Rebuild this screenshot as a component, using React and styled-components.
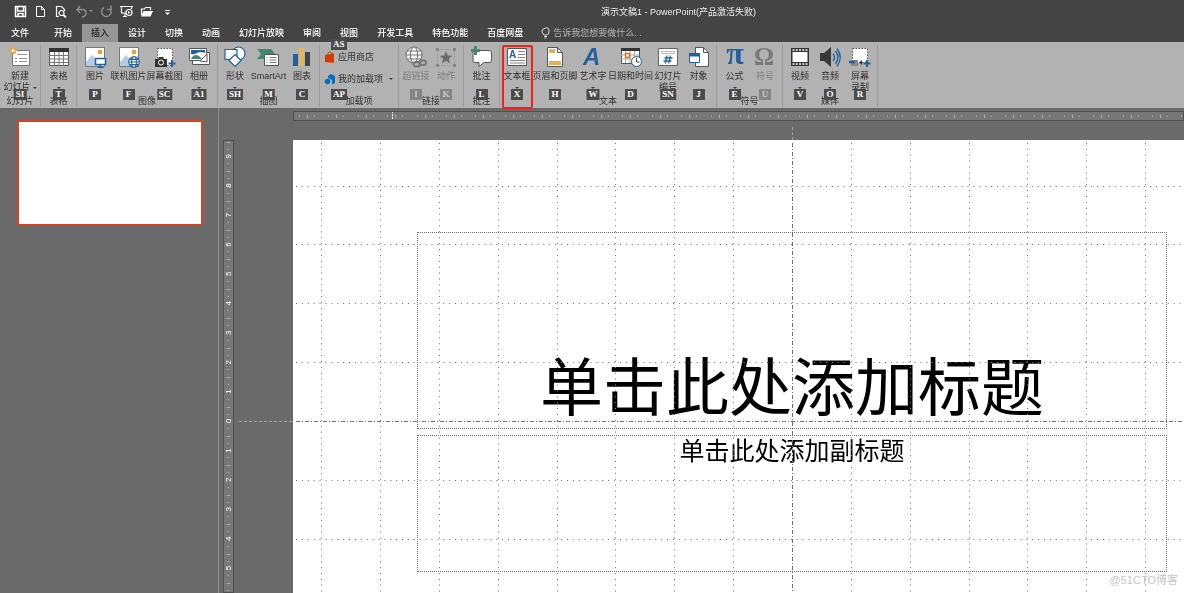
import styled, { createGlobalStyle, css } from "styled-components";

const GlobalStyle = createGlobalStyle`
  * {
    box-sizing: border-box;
  }
  body {
    margin: 0;
    background: #6a6a6a;
    font-family: "Liberation Sans", "Noto Sans CJK SC", sans-serif;
    font-size: 9px;
    line-height: 11px;
  }
  button,
  input {
    margin: 0;
    padding: 0;
    border: 0;
    background: none;
    color: inherit;
    font: inherit;
  }
`;

const Window = styled.div`
  display: flex;
  flex-direction: column;
  height: 100vh;
  overflow: hidden;
`;

const TitleBar = styled.header`
  display: flex;
  align-items: center;
  height: 24px;
  background: #444444;
  color: #f0f0f0;
`;

const QuickAccess = styled.div`
  display: flex;
  flex: 0 0 170px;
  gap: 7px;
  padding: 0 0 2px 14px;
`;

const QuickButton = styled.button`
  display: flex;
  align-items: center;
  flex: 0 0 ${(p) => (p.$split ? "19px" : "13px")};
  height: 14px;
  color: ${(p) => (p.$dim ? "#8c8c8c" : "#ffffff")};
`;

const WindowTitle = styled.h1`
  flex: 1;
  margin: 0;
  font-size: 9px;
  font-weight: normal;
  text-align: center;
`;

const TabBar = styled.nav`
  display: flex;
  flex: 0 0 18px;
  gap: 1px;
  background: #444444;
  color: #ffffff;
`;

const Tab = styled.button`
  padding: 0 9px;
  font-weight: 500;
  white-space: nowrap;
  ${(p) =>
    p.$file &&
    css`
      width: 44px;
      padding: 0 0 0 11px;
      text-align: left;
    `}
  ${(p) =>
    p.$active &&
    css`
      background: #959595;
      color: #262626;
    `}
`;

const TellMe = styled.label`
  display: flex;
  align-items: center;
  gap: 3px;
  padding-left: 8px;
`;

const TellMeInput = styled.input`
  width: 100px;
  color: #b5b5b5;
  &::placeholder {
    color: #b5b5b5;
    opacity: 1;
  }
`;

const RibbonBar = styled.section`
  display: flex;
  flex: 0 0 66px;
  padding: 3px 0 1px;
  background: #b2b2b2;
  color: #303030;
`;

const Group = styled.div`
  display: flex;
  flex-direction: column;
  justify-content: space-between;
  padding: 0 2px;
  border-right: 1px solid #9a9a9a;
`;

const GroupItems = styled.div`
  display: flex;
  height: 50px;
`;

const GroupName = styled.div`
  text-align: center;
  white-space: nowrap;
`;

const Item = styled.button`
  position: relative;
  display: flex;
  flex-direction: column;
  align-items: center;
  width: ${(p) => p.$width}px;
  padding-top: 1px;
  white-space: nowrap;
  color: ${(p) => (p.disabled ? "#7f7f7f" : "#303030")};
`;

const ItemIcon = styled.svg`
  flex: 0 0 22px;
  width: 22px;
  height: 22px;
  margin-bottom: 3px;
`;

const SecondLine = styled.span`
  display: flex;
  align-items: center;
  gap: 2px;
  height: 11px;
`;

const Arrow = styled.span`
  border: 2px solid transparent;
  border-top-color: #404040;
  border-bottom-width: 0;
`;

const KeyTip = styled.span`
  position: absolute;
  top: ${(p) => p.$top}px;
  left: ${(p) => (p.$left === undefined ? "50%" : `${p.$left}px`)};
  z-index: 1;
  min-width: 12px;
  padding: 0 2px;
  transform: ${(p) => (p.$left === undefined ? "translateX(-50%)" : "none")};
  background: ${(p) => (p.$dim ? "#858585" : "#4b4b4b")};
  color: ${(p) => (p.$dim ? "#c8c8c8" : "#ffffff")};
  font-family: "Liberation Serif", serif;
  font-size: 9px;
  font-weight: bold;
  text-align: center;
`;

const Highlight = styled.span`
  position: absolute;
  top: 0;
  left: 0;
  z-index: 2;
  width: 31px;
  height: 64px;
  border: 2px solid #f5201c;
  border-radius: 2px;
`;

const AddIns = styled.div`
  display: flex;
  flex-direction: column;
  gap: 10px;
  width: 74px;
  padding: 6px 0 0 2px;
`;

const AddInButton = styled.button`
  position: relative;
  display: flex;
  align-items: center;
  gap: 2px;
  height: 12px;
  white-space: nowrap;
`;

const AddInMenuArrow = styled(Arrow)`
  margin-left: 4px;
`;

const Workspace = styled.main`
  display: flex;
  flex: 1;
  min-height: 0;
  background: #6a6a6a;
`;

const Thumbnails = styled.aside`
  flex: 0 0 219px;
  padding: 12px 15px 0 17px;
  border-right: 1px solid #8e8e8e;
`;

const Thumbnail = styled.button`
  display: block;
  width: 100%;
  height: 106px;
  border: 2px solid #d9431f;
  background: #ffffff;
`;

const Editor = styled.section`
  position: relative;
  display: grid;
  flex: 1;
  grid-template-columns: 11px 1fr;
  grid-template-rows: 10px 1fr;
  gap: 19px 59px;
  min-width: 0;
  padding: 3px 0 0 4px;
`;

const Ruler = styled.svg`
  display: block;
  grid-column: ${(p) => (p.$vertical ? 1 : 2)};
  grid-row: ${(p) => (p.$vertical ? 2 : 1)};
  width: 100%;
  height: 100%;
  min-height: 0;
  outline: 1px solid #505050;
  outline-offset: -1px;
  background: #777777;
`;

const Slide = styled.article`
  position: relative;
  display: flex;
  grid-column: 2;
  grid-row: 2;
  flex-direction: column;
  gap: 6px;
  min-height: 0;
  padding: 92px 17px 0 124px;
  background: #ffffff;
`;

const Placeholder = styled.div`
  display: flex;
  flex: 0 0 auto;
  align-items: ${(p) => (p.$title ? "flex-end" : "flex-start")};
  justify-content: center;
  height: ${(p) => (p.$title ? 197 : 137)}px;
  border: 1px dotted #707070;
  color: #000000;
`;

const TitleText = styled.h2`
  margin: 0;
  font-size: 63px;
  font-weight: normal;
  line-height: 80px;
`;

const SubtitleText = styled.p`
  margin: 0;
  font-size: 25px;
  line-height: 30px;
`;

const GridOverlay = styled.svg`
  position: absolute;
  inset: 0;
  width: 100%;
  height: 100%;
  pointer-events: none;
  mix-blend-mode: difference;
`;

const GuideOverlay = styled.svg`
  position: absolute;
  inset: 0;
  width: 100%;
  height: 100%;
  pointer-events: none;
`;

const Watermark = styled.span`
  position: absolute;
  right: 6px;
  bottom: 6px;
  color: #c4c4c4;
  font-size: 11px;
  line-height: 14px;
`;

const BLUE = "#23609f";
const DARK = "#444444";

const Picture = () => (
  <>
    <path d="M1.5 1.5h19v19h-19z" fill="#fff" stroke="#777" />
    <path d="M2 16l6-7 5 6 3-2v7H2z" fill="#b5cce2" />
    <circle cx="16" cy="6" r="2.4" fill="#e8a33d" />
  </>
);

const Globe = ({ cx, cy, r, color }) => (
  <g fill="#fff" stroke={color} strokeWidth="1.1">
    <circle cx={cx} cy={cy} r={r} />
    <ellipse cx={cx} cy={cy} rx={r * 0.45} ry={r} />
    <path d={`M${cx - r} ${cy}h${2 * r}M${cx - r * 0.85} ${cy - r * 0.5}h${r * 1.7}M${cx - r * 0.85} ${cy + r * 0.5}h${r * 1.7}`} />
  </g>
);

const icons = {
  newSlide: (
    <>
      <path d="M3.5 4.5h17v15h-17z" fill="#fff" stroke="#777" />
      <path d="M8 8.5h10M6 12.5h2M10 12.5h8M6 15.5h2M10 15.5h8" stroke="#999" />
      <path d="M4 0v9M-.5 4.5h9M1 1.5l6 6M7 1.5l-6 6" stroke="#e0a33f" strokeWidth="1.3" />
      <circle cx="4" cy="4.5" r="1.6" fill="#fff3d6" />
    </>
  ),
  table: (
    <>
      <path d="M1.5 2.5h19v17h-19z" fill="#fff" stroke="#555" />
      <path d="M1 2h20v4H1z" fill="#333" />
      <path d="M1 9.5h20M1 13h20M1 16.5h20M6.5 6v14M11 6v14M15.5 6v14" stroke="#777" />
    </>
  ),
  picture: (
    <>
      <Picture />
      <path d="M11.5 12.5h10v6h-10z" fill="#fff" stroke={BLUE} strokeWidth="1.5" />
      <path d="M16.5 19v2M13.5 21.2h6" stroke={BLUE} strokeWidth="1.5" />
    </>
  ),
  online: (
    <>
      <Picture />
      <Globe cx={16} cy={16} r={5.3} color={BLUE} />
    </>
  ),
  screenshot: (
    <>
      <path d="M3.5 2.5h15v17h-15z" fill="#fff" stroke="#555" strokeDasharray="1.5 1.5" />
      <path d="M1 13h3l1-2h4l1 2h3v8H1z" fill="#333" />
      <circle cx="7" cy="16.5" r="2.5" fill="#333" stroke="#fff" />
      <path d="M18 14v7M14.5 17.5h7" stroke={BLUE} strokeWidth="2" />
    </>
  ),
  album: (
    <>
      <path d="M4.5 6.5h17v12h-17z" fill="#fff" stroke="#555" />
      <path d="M1.5 2.5h17v12h-17z" fill="#fff" stroke="#555" />
      <path d="M3 4h14v3q-5-2-8 0t-6 1z" fill={BLUE} />
      <path d="M3 13q3-6 8-3l3 3z" fill="#438672" />
      <path d="M12 15l7-7v8z" fill="#fff" stroke="#555" />
    </>
  ),
  shapes: (
    <g fill="#fff" stroke={BLUE} strokeWidth="1.2">
      <circle cx="14.5" cy="7.5" r="6.5" />
      <path d="M1 3.5h12v10H1z" />
      <path d="M11 8.5l6 6-6 6-6-6z" />
    </g>
  ),
  smartArt: (
    <>
      <path d="M-1 3h14l5 6-3 4H-1l4-5z" fill="#438672" />
      <path d="M6.5 8.5h14v11h-14z" fill="#fff" stroke="#555" />
      <path d="M8.5 11.5h1M11.5 11.5h7M8.5 14h1M11.5 14h7M8.5 16.5h1M11.5 16.5h7" stroke="#777" />
    </>
  ),
  chart: (
    <>
      <path d="M2 8h5v12H2z" fill={BLUE} />
      <path d="M8 2h5v18H8z" fill="#e2b764" />
      <path d="M14 6h5v14h-5z" fill={DARK} />
    </>
  ),
  link: (
    <>
      <Globe cx={9} cy={9} r={8} color="#777" />
      <g fill="none" stroke="#777" strokeWidth="1.8">
        <rect x="8.5" y="16" width="7" height="4.5" rx="2.2" />
        <rect x="14" y="14.5" width="7" height="4.5" rx="2.2" />
      </g>
    </>
  ),
  action: (
    <>
      <path d="M2.5 3.5h17v16h-17z" fill="none" stroke="#888" strokeDasharray="1 2" />
      <path d="M1 2h3v3H1zM18 2h3v3h-3zM1 18h3v3H1zM18 18h3v3h-3z" fill="#888" />
      <path d="M11 5l1.8 4.5 4.7.3-3.7 3 1.3 4.7-4.1-2.7-4.1 2.7 1.3-4.7-3.7-3 4.7-.3z" fill="#6b6b6b" />
    </>
  ),
  comment: (
    <>
      <path d="M3.5 4.5h15q2 0 2 2v8q0 2-2 2H13l-5 4v-4H4q-2 0-2-2v-8z" fill="#fff" stroke="#555" />
      <path d="M4.5 0v9M0 4.5h9" stroke="#438672" strokeWidth="3" />
    </>
  ),
  textBox: (
    <>
      <path d="M1.5 2.5h19v17h-19z" fill="#fff" stroke="#555" />
      <text x="3" y="12" fill={BLUE} fontSize="10" fontWeight="bold">A</text>
      <path d="M12 5.5h7M12 8.5h7M12 11.5h7M4 14.5h15M4 17h15" stroke="#888" />
    </>
  ),
  header: (
    <>
      <path d="M3.5 1.5h10l5 5v14h-15z" fill="#fff" stroke="#555" />
      <path d="M5 3h6v4H5zM5 15h12v4H5z" fill="#e2b050" />
      <path d="M13.5 1.5v5h5" fill="none" stroke="#555" />
    </>
  ),
  wordArt: (
    <text x="1" y="19" fill={BLUE} fontSize="24" fontStyle="italic" fontWeight="bold">A</text>
  ),
  date: (
    <>
      <path d="M1.5 2.5h18v15h-18z" fill="#fff" stroke="#555" />
      <path d="M1 2h19v3H1z" fill="#333" />
      <path d="M1 9h18M1 13h18M5.5 5v12M10 5v12M14.5 5v12" stroke="#aaa" />
      <path d="M5.5 7.5h4v4h-4z" fill="#fff" stroke="#dd6b20" strokeWidth="1.4" />
      <circle cx="16.5" cy="15.5" r="5" fill="#fff" stroke={BLUE} />
      <path d="M16.5 12v4h3" fill="none" stroke="#444" />
    </>
  ),
  number: (
    <>
      <path d="M1.5 2.5h19v17h-19z" fill="#fff" stroke="#666" />
      <path d="M4 5.5h14M4 7.5h14" stroke="#bbb" />
      <path d="M9.8 9.5l-1.5 8M13.3 9.5l-1.5 8M7.5 12h8M6.5 15h8" stroke={BLUE} strokeWidth="1.3" />
    </>
  ),
  object: (
    <>
      <path d="M7.5 1.5h8l5 5v14h-13z" fill="#fff" stroke="#555" />
      <path d="M15.5 1.5v5h5" fill="none" stroke="#555" />
      <path d="M1.5 7.5h10v9h-10z" fill="#fff" stroke={BLUE} />
      <path d="M1 7h11v3.5H1z" fill={BLUE} />
    </>
  ),
  equation: (
    <text x="11" y="18" fill={BLUE} fontFamily="Liberation Serif" fontSize="32" fontWeight="bold" textAnchor="middle">π</text>
  ),
  symbol: (
    <text x="10" y="19" fill="#777777" fontFamily="Liberation Serif" fontSize="25" fontWeight="bold" textAnchor="middle">Ω</text>
  ),
  video: (
    <>
      <path d="M2 2h18v18H2z" fill="#333" />
      <path d="M3.5 6h15v10h-15z" fill="#fff" />
      <path d="M3.5 4h15M3.5 18h15" stroke="#fff" strokeWidth="1.6" strokeDasharray="2 1.25" />
    </>
  ),
  audio: (
    <>
      <path d="M1 7h4l7-6v20l-7-6H1z" fill="#383838" />
      <path d="M14 8q3 3 0 7M16.5 5q5 6 0 13M18 2.5q6.5 9 0 18" fill="none" stroke={BLUE} strokeWidth="1.4" />
    </>
  ),
  record: (
    <>
      <path d="M3.5 2.5h15v14h-15z" fill="#fff" stroke="#555" strokeDasharray="1.5 1.5" />
      <path d="M2 14h7v6H2z" fill="#888" />
      <path d="M10 16.5l3-2.5v5z" fill="#333" />
      <path d="M0 16h6" stroke={BLUE} strokeWidth="2.5" />
      <path d="M18 14v7M14.5 17.5h7" stroke={BLUE} strokeWidth="2" />
    </>
  ),
};

const tabs = ["开始", "插入", "设计", "切换", "动画", "幻灯片放映", "审阅", "视图", "开发工具", "特色功能", "百度网盘"];

const slideGroups = [
  { name: "幻灯片", items: [{ label: "新建", second: "幻灯片", icon: "newSlide", tip: "SI", width: 36, arrow: true }] },
  { name: "表格", items: [{ label: "表格", icon: "table", tip: "T", width: 31, arrow: true }] },
  {
    name: "图像",
    items: [
      { label: "图片", icon: "picture", tip: "P", width: 32 },
      { label: "联机图片", icon: "online", tip: "F", width: 35 },
      { label: "屏幕截图", icon: "screenshot", tip: "SC", width: 37, arrow: true },
      { label: "相册", icon: "album", tip: "A1", width: 32, arrow: true },
    ],
  },
  {
    name: "插图",
    items: [
      { label: "形状", icon: "shapes", tip: "SH", width: 30, arrow: true },
      { label: "SmartArt", icon: "smartArt", tip: "M", width: 37 },
      { label: "图表", icon: "chart", tip: "C", width: 30 },
    ],
  },
];

const contentGroups = [
  {
    name: "链接",
    items: [
      { label: "超链接", icon: "link", tip: "I", width: 30, disabled: true },
      { label: "动作", icon: "action", tip: "K", width: 30, disabled: true },
    ],
  },
  { name: "批注", items: [{ label: "批注", icon: "comment", tip: "L", width: 31 }] },
  {
    name: "文本",
    items: [
      { label: "文本框", icon: "textBox", tip: "X", width: 30, arrow: true, highlight: true },
      { label: "页眉和页脚", icon: "header", tip: "H", width: 46 },
      { label: "艺术字", icon: "wordArt", tip: "W", width: 30, arrow: true },
      { label: "日期和时间", icon: "date", tip: "D", width: 45 },
      { label: "幻灯片", second: "编号", icon: "number", tip: "SN", width: 30 },
      { label: "对象", icon: "object", tip: "J", width: 31 },
    ],
  },
  {
    name: "符号",
    items: [
      { label: "公式", icon: "equation", tip: "E", width: 31, arrow: true },
      { label: "符号", icon: "symbol", tip: "U", width: 30, disabled: true },
    ],
  },
  {
    name: "媒体",
    items: [
      { label: "视频", icon: "video", tip: "V", width: 30, arrow: true },
      { label: "音频", icon: "audio", tip: "O", width: 30, arrow: true },
      { label: "屏幕", second: "录制", icon: "record", tip: "R", width: 30 },
    ],
  },
];

function RibbonGroup({ name, items }) {
  return (
    <Group>
      <GroupItems>
        {items.map((item) => (
          <Item key={item.label} $width={item.width} disabled={item.disabled}>
            <ItemIcon viewBox="0 0 22 22" overflow="visible" aria-hidden="true">
              {icons[item.icon]}
            </ItemIcon>
            <span>{item.label}</span>
            <SecondLine>
              {item.second}
              {item.arrow && <Arrow />}
            </SecondLine>
            <KeyTip $top={44} $dim={item.disabled}>{item.tip}</KeyTip>
            {item.highlight && <Highlight />}
          </Item>
        ))}
      </GroupItems>
      <GroupName>{name}</GroupName>
    </Group>
  );
}

function AddInsGroup() {
  return (
    <Group>
      <GroupItems>
        <AddIns>
          <AddInButton>
            <svg width="12" height="12" viewBox="0 0 12 12" aria-hidden="true">
              <path d="M1 4l9-1.5V12L1 11z" fill="#d83b01" />
              <path d="M4 4V2q2-2.5 4 0v1" fill="none" stroke="#d83b01" />
            </svg>
            应用商店
            <KeyTip $top={-12} $left={7}>AS</KeyTip>
          </AddInButton>
          <AddInButton>
            <svg width="12" height="12" viewBox="0 0 12 12" aria-hidden="true">
              <path d="M4 3l3-2 4 2v7l-3 1.5V7L4 5z" fill="#0b6cc4" />
              <circle cx="3.5" cy="8.5" r="2.8" fill="#0b6cc4" />
            </svg>
            我的加载项
            <AddInMenuArrow />
            <KeyTip $top={16} $left={7}>AP</KeyTip>
          </AddInButton>
        </AddIns>
      </GroupItems>
      <GroupName>加载项</GroupName>
    </Group>
  );
}

function QuickIcon({ children }) {
  return (
    <svg width="13" height="13" viewBox="0 0 13 13" fill="none" stroke="currentColor" strokeWidth="1.2" aria-hidden="true">
      {children}
    </svg>
  );
}

function QuickAccessBar() {
  return (
    <QuickAccess>
      <QuickButton aria-label="保存">
        <QuickIcon>
          <path d="M1.5 1.5h10v10h-10zM3.5 2v4h6V2M4 11.5v-3h5v3" strokeWidth="1.5" />
        </QuickIcon>
      </QuickButton>
      <QuickButton aria-label="新建">
        <QuickIcon>
          <path d="M2.5 1.5h5l3 3v7h-8zM7.5 1.5v3h3" strokeWidth="1" />
        </QuickIcon>
      </QuickButton>
      <QuickButton aria-label="打印预览">
        <QuickIcon>
          <path d="M5 11.5H2.5v-10h5l3 3V6" />
          <circle cx="7.5" cy="8" r="2.5" />
          <path d="M9.5 10l2.5 2.5" strokeWidth="1.8" />
        </QuickIcon>
      </QuickButton>
      <QuickButton aria-label="撤消" $dim $split>
        <QuickIcon>
          <path d="M6 1L3 4.5 6 8M3 4.5h5q4 0 4 3.5t-4 4" strokeWidth="1.5" />
        </QuickIcon>
        <svg width="6" height="4" viewBox="0 0 6 4" aria-hidden="true">
          <path d="M2 1h4L4 3z" fill="currentColor" />
        </svg>
      </QuickButton>
      <QuickButton aria-label="重复" $dim>
        <QuickIcon>
          <path d="M10 3.5A4.8 4.8 0 1 1 4 2.5M7 4.5h4V.5" strokeWidth="1.5" />
        </QuickIcon>
      </QuickButton>
      <QuickButton aria-label="从头开始放映">
        <QuickIcon>
          <path d="M0 1.5h13M1.5 2v6H5M11.5 2v2M5 8v3M3 11.5h4" />
          <circle cx="9" cy="7.5" r="3" />
          <path d="M8 6l2.5 1.5L8 9z" fill="currentColor" stroke="none" />
        </QuickIcon>
      </QuickButton>
      <QuickButton aria-label="打开">
        <QuickIcon>
          <path d="M1.5 10V4h3l1-1.5h5V5" />
          <path d="M1 11.5L3.5 6H13l-2.5 5.5z" fill="currentColor" stroke="none" />
        </QuickIcon>
      </QuickButton>
      <QuickButton aria-label="自定义快速访问工具栏">
        <QuickIcon>
          <path d="M5 5.5h5" strokeWidth="1" />
          <path d="M5 7.5h5L7.5 10z" fill="currentColor" stroke="none" />
        </QuickIcon>
      </QuickButton>
    </QuickAccess>
  );
}

// One centimetre on the rulers; the slide grid uses two of them.
const CM = 29.42;
const CENTER_X = 499;
const CENTER_Y = 281;

const range = (from, to) => Array.from({ length: to - from + 1 }, (_, i) => from + i);

function HorizontalRuler() {
  return (
    <Ruler aria-hidden="true" stroke="#aaaaaa">
      {range(-17, 40).map((n) => {
        const x = Math.round(CENTER_X + n * CM) + 0.5;
        return (
          <path key={n} d={`M${x + 7} 4.5v1.5M${x + 15} 3.5v3.5M${x + 22} 4.5v1.5`} />
        );
      })}
      <path d="M99.5 0v10" stroke="#ffffff" strokeDasharray="2 1" />
    </Ruler>
  );
}

function VerticalRuler() {
  return (
    <Ruler $vertical aria-hidden="true" stroke="#aaaaaa">
      {range(-10, 30).map((n) => {
        const y = Math.round(CENTER_Y + n * CM) + 0.5;
        return <path key={n} d={`M4.5 ${y + 7}h1.5M3.5 ${y + 15}h3.5M4.5 ${y + 22}h1.5`} />;
      })}
      {range(-9, 5).map((n) => (
        <text
          key={n}
          transform={`translate(8 ${CENTER_Y + n * CM}) rotate(-90)`}
          textAnchor="middle"
          fill="#ffffff"
          stroke="none"
          fontSize="8"
        >
          {Math.abs(n)}
        </text>
      ))}
    </Ruler>
  );
}

function SlideGrid() {
  return (
    <GridOverlay aria-hidden="true" stroke="#909090">
      {range(-8, 24).map((n) => {
        const x = Math.round(CENTER_X + n * CM * 2) + 0.5;
        return <line key={n} x1={x} x2={x} y1="3" y2="100%" strokeDasharray={n ? "1 4.89" : "4 2 1 2"} />;
      })}
      {range(-4, 12).map((n) => {
        const y = Math.round(CENTER_Y + n * CM * 2) + 0.5;
        return <line key={n} x1="3" x2="100%" y1={y} y2={y} strokeDasharray={n ? "1 4.89" : "4 2 1 2"} />;
      })}
    </GridOverlay>
  );
}

export default function App() {
  return (
    <Window>
      <GlobalStyle />
      <TitleBar>
        <QuickAccessBar />
        <WindowTitle>演示文稿1 - PowerPoint(产品激活失败)</WindowTitle>
      </TitleBar>
      <TabBar>
        <Tab $file>文件</Tab>
        {tabs.map((tab) => (
          <Tab key={tab} $active={tab === "插入"}>{tab}</Tab>
        ))}
        <TellMe>
          <svg width="9" height="12" viewBox="0 0 9 12" fill="none" stroke="#dddddd" aria-label="搜索">
            <path d="M3 8Q1 6 1 4t3.5-3T8 4 6 8zM3 9.5h3M3.5 11h2" />
          </svg>
          <TellMeInput placeholder="告诉我您想要做什么. ." />
        </TellMe>
      </TabBar>
      <RibbonBar>
        {slideGroups.map((group) => (
          <RibbonGroup key={group.name} {...group} />
        ))}
        <AddInsGroup />
        {contentGroups.map((group) => (
          <RibbonGroup key={group.name} {...group} />
        ))}
      </RibbonBar>
      <Workspace>
        <Thumbnails>
          <Thumbnail aria-label="幻灯片 1" />
        </Thumbnails>
        <Editor>
          <HorizontalRuler />
          <VerticalRuler />
          <Slide>
            <Placeholder $title>
              <TitleText>单击此处添加标题</TitleText>
            </Placeholder>
            <Placeholder>
              <SubtitleText>单击此处添加副标题</SubtitleText>
            </Placeholder>
            <SlideGrid />
            <Watermark>@51CTO博客</Watermark>
          </Slide>
          <GuideOverlay aria-hidden="true" stroke="#a0a0a0" strokeDasharray="3 2">
            <line x1="20" x2="74" y1="313.5" y2="313.5" />
            <line x1="573.5" x2="573.5" y1="19" y2="32" />
          </GuideOverlay>
        </Editor>
      </Workspace>
    </Window>
  );
}
